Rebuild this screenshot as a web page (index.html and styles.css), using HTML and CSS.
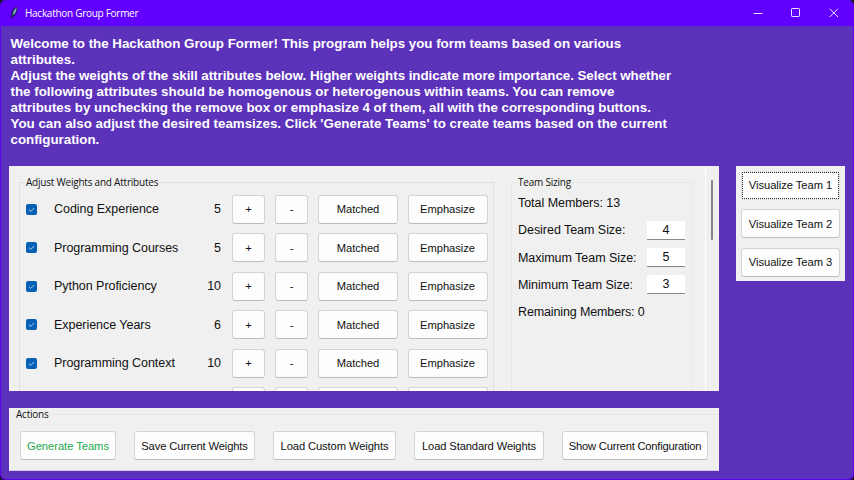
FILE: index.html
```html
<!DOCTYPE html>
<html lang="en">
<head>
<meta charset="utf-8">
<title>Hackathon Group Former</title>
<link rel="stylesheet" href="styles.css">
</head>
<body>
<div class="window">
  <header class="titlebar">
    <svg class="feather" width="10" height="14" viewBox="0 0 10 14"><path d="M2.500 13.300 L2.400 9 C2.300 5 4.500 2 7.700 .5 C9.200 4 7.600 8.500 4 11 Z" fill="#17143c"/><path d="M3.600 9.500 C3.600 6 5 3 7.300 1.500 C8 4 6.600 8 3.600 9.500 Z" fill="#7fb4d0"/><path d="M3 12.500 C3.500 8 5 4.500 6.800 2.300" stroke="#2b3a60" stroke-width=".4" fill="none"/></svg>
    <h1 class="caption">Hackathon Group Former</h1>
    <div class="controls">
      <svg width="10" height="10" viewBox="0 0 10 10"><path d="M.5 5.500H9.500"/></svg>
      <svg width="10" height="10" viewBox="0 0 10 10"><rect x=".5" y=".5" width="8" height="8" rx=".7"/></svg>
      <svg width="10" height="10" viewBox="0 0 10 10"><path d="M.7 .7L9 9M9 .7L.7 9"/></svg>
    </div>
  </header>
  <main class="content">
    <p class="intro">Welcome to the Hackathon Group Former! This program helps you form teams based on various<br>attributes.<br><span class="tight">Adjust the weights of the skill attributes below. Higher weights indicate more importance. Select whether</span><br><span class="wide">the following attributes should be homogenous or heterogenous within teams. You can remove</span><br>attributes by unchecking the remove box or emphasize 4 of them, all with the corresponding buttons.<br><span class="wide">You can also adjust the desired teamsizes. Click 'Generate Teams' to create teams based on the current</span><br>configuration.</p>
    <div class="columns">
      <div class="left">
        <section class="panel">
          <div class="group weights">
            <h2 class="legend">Adjust Weights and Attributes</h2>
            <div class="row"><span class="check"><svg viewBox="0 0 11 11"><path d="M3 5.700L4.800 7.400L8.200 4"/></svg></span><span class="name">Coding Experience</span><span class="value">5</span><button>+</button><button>-</button><button>Matched</button><button>Emphasize</button></div>
            <div class="row"><span class="check"><svg viewBox="0 0 11 11"><path d="M3 5.700L4.800 7.400L8.200 4"/></svg></span><span class="name">Programming Courses</span><span class="value">5</span><button>+</button><button>-</button><button>Matched</button><button>Emphasize</button></div>
            <div class="row"><span class="check"><svg viewBox="0 0 11 11"><path d="M3 5.700L4.800 7.400L8.200 4"/></svg></span><span class="name">Python Proficiency</span><span class="value">10</span><button>+</button><button>-</button><button>Matched</button><button>Emphasize</button></div>
            <div class="row"><span class="check"><svg viewBox="0 0 11 11"><path d="M3 5.700L4.800 7.400L8.200 4"/></svg></span><span class="name">Experience Years</span><span class="value">6</span><button>+</button><button>-</button><button>Matched</button><button>Emphasize</button></div>
            <div class="row"><span class="check"><svg viewBox="0 0 11 11"><path d="M3 5.700L4.800 7.400L8.200 4"/></svg></span><span class="name">Programming Context</span><span class="value">10</span><button>+</button><button>-</button><button>Matched</button><button>Emphasize</button></div>
            <div class="row"><span></span><span></span><span></span><button></button><button></button><button></button><button></button></div>
          </div>
          <div class="group sizing">
            <h2 class="legend">Team Sizing</h2>
            <div class="size"><span>Total Members: 13</span></div>
            <div class="size"><span>Desired Team Size:</span><span class="field">4</span></div>
            <div class="size"><span>Maximum Team Size:</span><span class="field">5</span></div>
            <div class="size"><span>Minimum Team Size:</span><span class="field">3</span></div>
            <div class="size"><span class="remaining">Remaining Members: 0</span></div>
          </div>
          <div class="scrollbar"><div class="thumb"></div></div>
        </section>
        <section class="actions">
          <h2 class="legend">Actions</h2>
          <div class="buttons">
            <button class="generate">Generate Teams</button>
            <button class="save">Save Current Weights</button>
            <button class="custom">Load Custom Weights</button>
            <button class="standard">Load Standard Weights</button>
            <button class="show">Show Current Configuration</button>
          </div>
        </section>
      </div>
      <aside class="teams">
        <button class="focused"><span>Visualize Team 1</span></button>
        <button>Visualize Team 2</button>
        <button>Visualize Team 3</button>
      </aside>
    </div>
  </main>
</div>
</body>
</html>
```
FILE: styles.css
```css
* { box-sizing: border-box; }
body { margin: 0; background: #19132b; overflow: hidden; font-family: "Liberation Sans", Arial, sans-serif; color: #111; }
h1, h2, p { margin: 0; font-weight: normal; }
.window { width: 854px; height: 480px; border: 1px solid #6000f5; border-top: 0; border-radius: 6px; overflow: hidden; background: #5c32bb; }
.titlebar { height: 26px; background: #6200ff; display: flex; align-items: center; padding: 0 14px 0 8px; }
.feather { margin-right: 6px; }
.caption { font: 10px/14px "Open Sans", "Noto Sans", sans-serif; letter-spacing: -.28px; color: #fff; white-space: nowrap; }
.controls { margin-left: auto; display: flex; gap: 28px; }
.controls svg { fill: none; stroke: #eee4ff; stroke-width: 1; }
.content { padding: 10px 8px 0; }
.intro { height: 130px; padding-left: 1.5px; font-weight: bold; font-size: 13.33px; letter-spacing: -.01px; line-height: 16px; color: #fff; white-space: nowrap; }
.tight { letter-spacing: -.03px; }
.wide { letter-spacing: .01px; }
.columns { display: flex; align-items: flex-start; gap: 17px; }
.left { width: 710px; display: flex; flex-direction: column; gap: 17px; }
.panel { height: 225px; background: #f0f0f0; display: flex; padding: 16px 0 0 10px; overflow: hidden; }
.group { border: 1px solid #dfdfdf; border-bottom: 0; height: 240px; flex: none; }
.legend { width: max-content; background: #f0f0f0; font: 10px/12px "Open Sans", "Noto Sans", sans-serif; letter-spacing: -.22px; white-space: nowrap; padding: 0 1px; }
.weights { width: 475px; padding-left: 6px; }
.weights .legend, .sizing .legend { margin-top: -7px; }
.weights .legend { margin-bottom: 2px; margin-left: -1px; }
.row { height: 38.5px; display: grid; grid-template-columns: 12px 156px 27px 11px 33px 10px 33px 10px 80px 9.5px 80px; align-items: center; }
.row > :nth-child(2) { margin-left: 16px; }
.row > :nth-child(4) { grid-column: 5; }
.row > :nth-child(5) { grid-column: 7; }
.row > :nth-child(6) { grid-column: 9; }
.row > :nth-child(7) { grid-column: 11; }
.check { width: 11px; height: 11px; border-radius: 2px; background: #0560b6; display: block; }
.check svg { display: block; fill: none; stroke: #d8e9fa; stroke-width: .8; }
.name, .value, .size { font-size: 12.5px; line-height: 16px; letter-spacing: -.04px; white-space: nowrap; }
.value { text-align: right; }
button { height: 29px; padding: 0; border: 1px solid #d3d3d3; border-bottom-color: #bcbcbc; border-radius: 3px; background: #fdfdfd; font: 11.2px/14px "Liberation Sans", Arial, sans-serif; letter-spacing: -.04px; color: #111; white-space: nowrap; }
.sizing { margin-left: 17px; width: 181px; padding: 0 6px; border-color: #e7e7e7; }
.sizing .legend { margin-bottom: 2px; margin-left: -1px; }
.size { height: 27.4px; display: flex; align-items: center; justify-content: space-between; }
.sizing .legend + .size { height: 26.5px; }
.remaining { letter-spacing: -.13px; }
.field { width: 38px; height: 19px; background: #fff; border-bottom: 1px solid #888; text-align: center; line-height: 19px; }
.scrollbar { width: 14px; height: 225px; margin: -16px 0 0 auto; border-left: 1px solid #fff; padding: 14px 0 0 5.4px; }
.thumb { width: 2px; height: 60px; border-radius: 1px; background: #858585; }
.actions { height: 63px; background: #f0f0f0; border-bottom: 1px solid #d5cbe5; background-image: linear-gradient(#e5e5e5, #e5e5e5); background-size: 100% 1px; background-position: 0 6px; background-repeat: no-repeat; }
.actions .legend { margin-left: 6px; }
.buttons { display: flex; padding: 11px 0 0 11px; }
.generate { width: 96px; margin-right: 18px; color: #24a84a; }
.save { width: 121px; margin-right: 18px; letter-spacing: -.14px; }
.custom { width: 123px; margin-right: 18px; letter-spacing: -.1px; }
.standard { width: 130px; margin-right: 18px; letter-spacing: -.13px; }
.show { width: 146px; letter-spacing: -.22px; }
.teams { width: 109px; height: 115px; padding: 4.5px 5px 0; background: #f0f0f0; display: flex; flex-direction: column; gap: 9.5px; }
.teams button { width: 99px; flex: none; }
.teams .focused { padding: 0; border-color: #e0e0e0; }
.focused span { display: flex; align-items: center; justify-content: center; height: 27px; border: 1px dotted #222; border-radius: 1px; }
```
